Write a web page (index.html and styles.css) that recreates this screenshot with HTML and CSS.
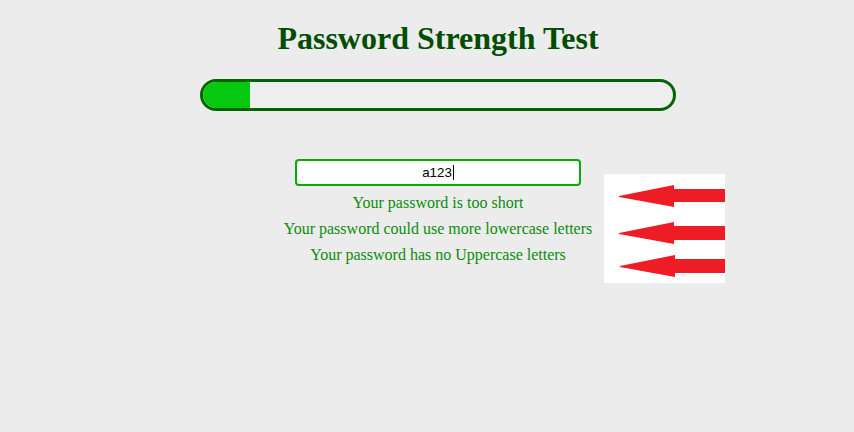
FILE: index.html
```html
<!DOCTYPE html>
<html>
<head>
<meta charset="utf-8">
<link rel="stylesheet" href="styles.css">
</head>
<body>
<main class="page">
  <h1 class="title">Password Strength Test</h1>
  <div class="meter"><div class="meter-fill" style="width:47px"></div></div>
  <div class="field"><span class="field-text">a123</span><span class="caret"></span></div>
  <div class="messages">
    <p class="msg">Your password is too short</p>
    <p class="msg">Your password could use more lowercase letters</p>
    <p class="msg">Your password has no Uppercase letters</p>
  </div>
</main>
<svg class="arrows" width="121" height="109" viewBox="0 0 121 109">
  <rect width="121" height="109" fill="#fff"/>
  <polygon fill="#ee1c25" points="15,22 70,11 70,15 121,15 121,28 70,28 70,33 15,23"/>
  <polygon fill="#ee1c25" points="15,59 70,48 70,52 121,52 121,66 70,66 70,70 15,60"/>
  <polygon fill="#ee1c25" points="16,92 71,81 71,85 121,85 121,99 71,99 71,103 16,93"/>
</svg>
</body>
</html>
```
FILE: styles.css
```css
html, body {
  margin: 0;
  padding: 0;
  background: #ececec;
}
body {
  width: 854px;
  height: 432px;
  position: relative;
  overflow: hidden;
}
.page {
  padding-left: 22px;
  display: flex;
  flex-direction: column;
  align-items: center;
}
.title {
  font-family: "Liberation Serif", "Times New Roman", serif;
  font-weight: bold;
  font-size: 32px;
  line-height: 37px;
  color: #004d00;
  margin: 20px 0 0;
}
.meter {
  box-sizing: border-box;
  width: 476px;
  height: 32px;
  border: 3px solid #006400;
  border-radius: 16px;
  background: #eeeeee;
  margin-top: 22px;
  overflow: hidden;
}
.meter-fill {
  height: 100%;
  background: #06c80f;
}
.field {
  box-sizing: border-box;
  width: 286px;
  height: 27px;
  margin-top: 48px;
  border: 2px solid #00ad00;
  border-radius: 4px;
  background: #fff;
  display: flex;
  align-items: center;
  justify-content: center;
  font-family: "Liberation Sans", Arial, sans-serif;
  font-size: 13.33px;
  color: #000;
}
.caret {
  width: 1px;
  height: 15px;
  background: #000;
  margin-left: 1px;
}
.messages {
  margin-top: 4px;
  display: flex;
  flex-direction: column;
  align-items: center;
}
.msg {
  margin: 0;
  font-family: "Liberation Serif", "Times New Roman", serif;
  font-size: 16px;
  line-height: 26px;
  color: #0b8c0b;
}
.arrows {
  position: absolute;
  left: 604px;
  top: 174px;
}
```
